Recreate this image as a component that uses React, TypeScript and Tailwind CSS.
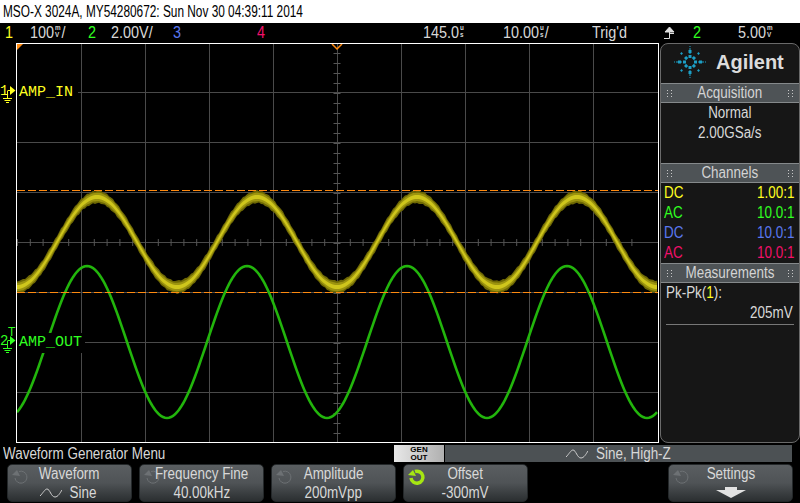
import React from "react";

const wave = (x: number, amp: number, mid: number, peakX: number) =>
  mid - amp * Math.cos(((x + 17 - peakX) / 160) * 2 * Math.PI);

const sine = (amp: number, mid: number, peakX: number) => {
  const pts: string[] = [];
  for (let x = 0; x <= 641; x += 2) {
    pts.push(`${x},${wave(x, amp, mid, peakX).toFixed(1)}`);
  }
  return pts.join(" ");
};

// noisy trace: the noise is vertical, so the band is a polygon and not a stroke
const band = (half: number, fuzz: number) => {
  const top: string[] = [];
  const bottom: string[] = [];
  for (let x = 0; x <= 641; x += 2) {
    const y = wave(x, 45, 198, 97);
    const a = ((x * 7919) % 13) / 13;
    const b = ((x * 104729) % 11) / 11;
    top.push(`${x},${(y - half - a * fuzz).toFixed(1)}`);
    bottom.unshift(`${x},${(y + half + b * fuzz).toFixed(1)}`);
  }
  return [...top, ...bottom].join(" ");
};

// text is condensed like the scope's bitmap font
const T = ({ children, align = "c", className = "scale-x-[0.84]" }: { children: React.ReactNode; align?: "l" | "c" | "r"; className?: string }) => {
  const origin = align === "l" ? "origin-left" : align === "r" ? "origin-right" : "origin-center";
  return <span className={`inline-block whitespace-nowrap ${origin} ${className}`}>{children}</span>;
};

const S = ({ children }: { children: React.ReactNode }) => (
  <T align="l" className="scale-x-[0.9]">{children}</T>
);

const Unit = ({ top, bottom }: { top: string; bottom: string }) => (
  <span className="inline-flex flex-col align-top text-[7px] leading-[7px] mt-[3px] mx-[1px] font-bold">
    <span>{top}</span>
    <span>{bottom}</span>
  </span>
);

const SineIcon = ({ className = "" }: { className?: string }) => (
  <svg width="22" height="12" viewBox="0 0 22 12" className={className} fill="none" stroke="#cfcfcf" strokeWidth="1">
    <path d="M0 9 C3 6 5 2 7 2 C10 2 11 10 15 10 C18 10 20 6 22 3" />
  </svg>
);

const Refresh = ({ color, width = 3.5 }: { color: string; width?: number }) => (
  <svg width="18" height="18" viewBox="0 0 18 18" fill="none">
    <path d="M7 3.5 A6 6 0 1 1 3 10" stroke={color} strokeWidth={width} />
    <path d="M0 7 L5 2 L8 8 Z" fill={color} />
  </svg>
);

const Grip = () => (
  <span className="grid grid-cols-2 gap-x-[3px] gap-y-[2px]">
    {[0, 1, 2, 3, 4, 5].map((i) => (
      <span key={i} className="w-[1px] h-[1px] bg-[#c8c8c8]" />
    ))}
  </span>
);

const PanelHeader = ({ title }: { title: string }) => (
  <div className="h-[20px] flex items-center justify-between px-[6px] bg-[#4e5356] border-y border-[#85898b] text-[#d4d4d4] text-[16px]">
    <Grip />
    <T>{title}</T>
    <Grip />
  </div>
);

const ChannelRow = ({ coupling, ratio, color }: { coupling: string; ratio: string; color: string }) => (
  <div className={`h-[20px] flex items-center justify-between pl-[3px] pr-[5px] text-[16px] ${color}`}>
    <T align="l">{coupling}</T>
    <T align="r">{ratio}</T>
  </div>
);

const SoftKey = ({ title, children, active }: { title: string; children: React.ReactNode; active?: boolean }) => (
  <div className="relative w-[125px] h-[38px] rounded-[5px] border border-[#24282a] bg-gradient-to-b from-[#5a5e61] via-[#4f5356] to-[#2b2f31] text-[#d8d8d8] text-[16px] leading-[19px]">
    <div className="absolute left-[4px] top-[3px]">
      {active ? <Refresh color="#a6e612" /> : <Refresh color="#6d7174" width={1} />}
    </div>
    <div className="flex flex-col items-center mt-[-1px]">
      <T>{title}</T>
      <div className="flex items-center justify-center">{children}</div>
    </div>
  </div>
);

const Marker = ({ n, color, hex }: { n: string; color: string; hex: string }) => (
  <div className={`relative w-[16px] h-[24px] ${color} text-[14px]`}>
    <span className="absolute left-[0px] top-[-2px] leading-[16px] font-['Liberation_Mono',monospace]">{n}</span>
    <svg width="16" height="24" viewBox="0 0 16 24" className="absolute left-0 top-0" fill="none" stroke={hex}>
      <path d="M7.5 6 V13 M7.5 5.5 H10" />
      <path d="M10 1 L15.5 5.5 L10 10 Z" fill={hex} stroke="none" />
      <path d="M3 13.5 H12 M4.5 15.5 H10.5 M6 17.5 H9" />
    </svg>
  </div>
);

const Logo = () => {
  const arms = [0, 45, 90, 135, 180, 225, 270, 315];
  return (
    <svg width="40" height="32" viewBox="-20 -16 40 32" fill="#1c9fc6">
      {arms.map((a) => {
        const straight = a % 90 === 0;
        return (
          <g key={a} transform={`rotate(${a})`}>
            <rect x="4" y="-1.5" width="3" height="3" />
            {straight ? (
              <>
                <rect x="9" y="-1.5" width="3" height="3" />
                <rect x="8" y="-0.5" width="6" height="1" />
                <rect x="15" y="-0.5" width="1" height="1" />
              </>
            ) : (
              <rect x="11" y="-1" width="2" height="2" />
            )}
          </g>
        );
      })}
    </svg>
  );
};

export default function App() {
  const vLines = [64, 128, 192, 256, 320, 384, 448, 512, 576];
  const hLines = [49, 99, 149, 199, 249, 299, 349];
  const hTicks = Array.from({ length: 49 }, (_, i) => i * 12.8 + 0.5);
  const vTicks = Array.from({ length: 39 }, (_, i) => (i + 1) * 10 - 0.5);

  return (
    <div className="w-[800px] h-[503px] overflow-hidden bg-black flex flex-col font-['Liberation_Sans',sans-serif]">
      <div className="h-[23px] bg-white text-black text-[16px] leading-[23px] pl-[3px]">
        <T align="l" className="scale-x-[0.74]">MSO-X 3024A, MY54280672: Sun Nov 30 04:39:11 2014</T>
      </div>

      <div className="h-[20px] flex items-center text-[16px] text-[#d8d8d8]">
        <span className="w-[30px] pl-[5px] text-[#ffff20]"><S>1</S></span>
        <span className="w-[58px]"><S>100<Unit top="m" bottom="V" />/</S></span>
        <span className="w-[23px] text-[#30ff20]"><S>2</S></span>
        <span className="w-[62px]"><S>2.00V/</S></span>
        <span className="w-[84px] text-[#5a78f0]"><S>3</S></span>
        <span className="w-[166px] text-[#f0106a]"><S>4</S></span>
        <span className="w-[80px]"><S>145.0<Unit top="u" bottom="s" /></S></span>
        <span className="w-[89px]"><S>10.00<Unit top="u" bottom="s" />/</S></span>
        <span className="w-[72px]"><S>Trig'd</S></span>
        <span className="w-[29px]">
          <svg width="11" height="12" viewBox="0 0 11 12" fill="none" stroke="#e0e0e0" className="block">
            <path d="M5.5 0 L10 5 H1 Z" fill="#e0e0e0" />
            <path d="M0 11.5 H5.5 V1 M5.5 6.5 H10" />
          </svg>
        </span>
        <span className="w-[45px] text-[#30ff20]"><S>2</S></span>
        <span><S>5.00<Unit top="m" bottom="V" /></S></span>
      </div>

      <div className="relative h-[400px] flex">
        <div className="w-[16px]" />
        <div className="relative w-[643px] h-[400px] border border-white">
          <svg width="641" height="398" viewBox="0 0 641 398" className="block" fill="none">
            <g stroke="#4a4a4a">
              {vLines.map((x) => <path key={x} d={`M${x + 0.5} 0 V398`} />)}
              {hLines.map((y) => <path key={y} d={`M0 ${y - 0.5} H641`} />)}
              {hTicks.map((x) => <path key={x} d={`M${x} 195 V202`} stroke="#555" />)}
              {vTicks.map((y) => <path key={y} d={`M316.5 ${y} H323.5`} stroke="#555" />)}
            </g>
            <polygon points={band(5.5, 1.5)} fill="#6e6804" />
            <polygon points={band(4, 0.5)} fill="#9c940f" />
            <polygon points={band(2, 0)} fill="#cfc61c" />
            <polyline points={sine(76, 298, 87)} stroke="#22b50c" strokeWidth="2.6" />
            <path d="M0 146.5 H641" stroke="#ff8a10" strokeDasharray="8 3" />
            <path d="M0 248.5 H641" stroke="#ff8a10" strokeDasharray="8 3" />
            <path d="M0 0 H6 L0 6 Z" fill="#ff8a10" />
            <path d="M315 0 L320 5 L325 0" stroke="#ff8a10" strokeWidth="1.5" />
          </svg>
          <div className="absolute left-[0px] top-[40px] h-[18px] pl-[2px] pr-[5px] bg-black text-[#ffff20] text-[15px] leading-[18px] font-['Liberation_Mono',monospace]">AMP_IN</div>
          <div className="absolute left-[0px] top-[289px] h-[20px] pl-[2px] pr-[3px] bg-black text-[#30ff20] text-[15px] leading-[20px] font-['Liberation_Mono',monospace]">AMP_OUT</div>
        </div>

        <div className="absolute left-0 top-[42px]"><Marker n="1" color="text-[#ffff20]" hex="#ffff20" /></div>
        <div className="absolute left-0 top-[292px]"><Marker n="2" color="text-[#30ff20]" hex="#30ff20" /></div>
        <span className="absolute left-[8px] top-[283px] text-[#30ff20] text-[12px] leading-[12px]">T</span>

        <div className="ml-[1px] w-[140px] h-[400px] rounded-[8px] border border-[#6a6a6a] bg-[#161616] flex flex-col">
          <div className="h-[39px] flex items-center pb-[3px]">
            <div className="w-[56px] flex justify-center pl-[2px]"><Logo /></div>
            <span className="ml-[-1px] text-[#dcdcdc] text-[20px] font-bold leading-none">Agilent</span>
          </div>
          <PanelHeader title="Acquisition" />
          <div className="h-[60px] flex flex-col items-center text-[#d8d8d8] text-[16px] leading-[20px]">
            <T>Normal</T>
            <T>2.00GSa/s</T>
          </div>
          <PanelHeader title="Channels" />
          <ChannelRow coupling="DC" ratio="1.00:1" color="text-[#ffff20]" />
          <ChannelRow coupling="AC" ratio="10.0:1" color="text-[#30ff20]" />
          <ChannelRow coupling="DC" ratio="10.0:1" color="text-[#5a78f0]" />
          <ChannelRow coupling="AC" ratio="10.0:1" color="text-[#f0106a]" />
          <PanelHeader title="Measurements" />
          <div className="px-[5px] text-[16px] leading-[20px] text-[#d8d8d8]">
            <T align="l">Pk-Pk(<span className="text-[#ffff20]">1</span>):</T>
            <div className="text-right pr-[1px]"><T align="r">205mV</T></div>
            <div className="h-[1px] bg-[#777] mt-[1px]" />
          </div>
        </div>
      </div>

      <div className="h-[21px] flex items-center pl-[3px] text-[#d8d8d8] text-[16px]">
        <div className="w-[391px]"><T align="l">Waveform Generator Menu</T></div>
        <div className="w-[50px] h-[17px] bg-gradient-to-r from-[#e8e8e8] to-[#b0b0b0] text-black text-[8px] leading-[8px] flex flex-col items-center justify-center font-bold">
          <span>GEN</span>
          <span>OUT</span>
        </div>
        <div className="ml-[1px] w-[347px] h-[17px] pl-[6px] bg-[#4c5154] flex items-center justify-center gap-[1px]">
          <SineIcon />
          <T>Sine, High-Z</T>
        </div>
      </div>

      <div className="pl-[7px] flex gap-[7px]">
        <SoftKey title="Waveform"><SineIcon className="mr-[5px]" /><T>Sine</T></SoftKey>
        <SoftKey title="Frequency Fine"><T>40.00kHz</T></SoftKey>
        <SoftKey title="Amplitude"><T>200mVpp</T></SoftKey>
        <SoftKey title="Offset" active><T>-300mV</T></SoftKey>
        <div className="ml-[133px]">
          <SoftKey title="Settings">
            <svg width="30" height="11" viewBox="0 0 30 11" fill="#e2e2e2" className="mt-[4px]">
              <path d="M9 0 H21 V3 H30 L15 11 L0 3 H9 Z" />
            </svg>
          </SoftKey>
        </div>
      </div>
    </div>
  );
}
